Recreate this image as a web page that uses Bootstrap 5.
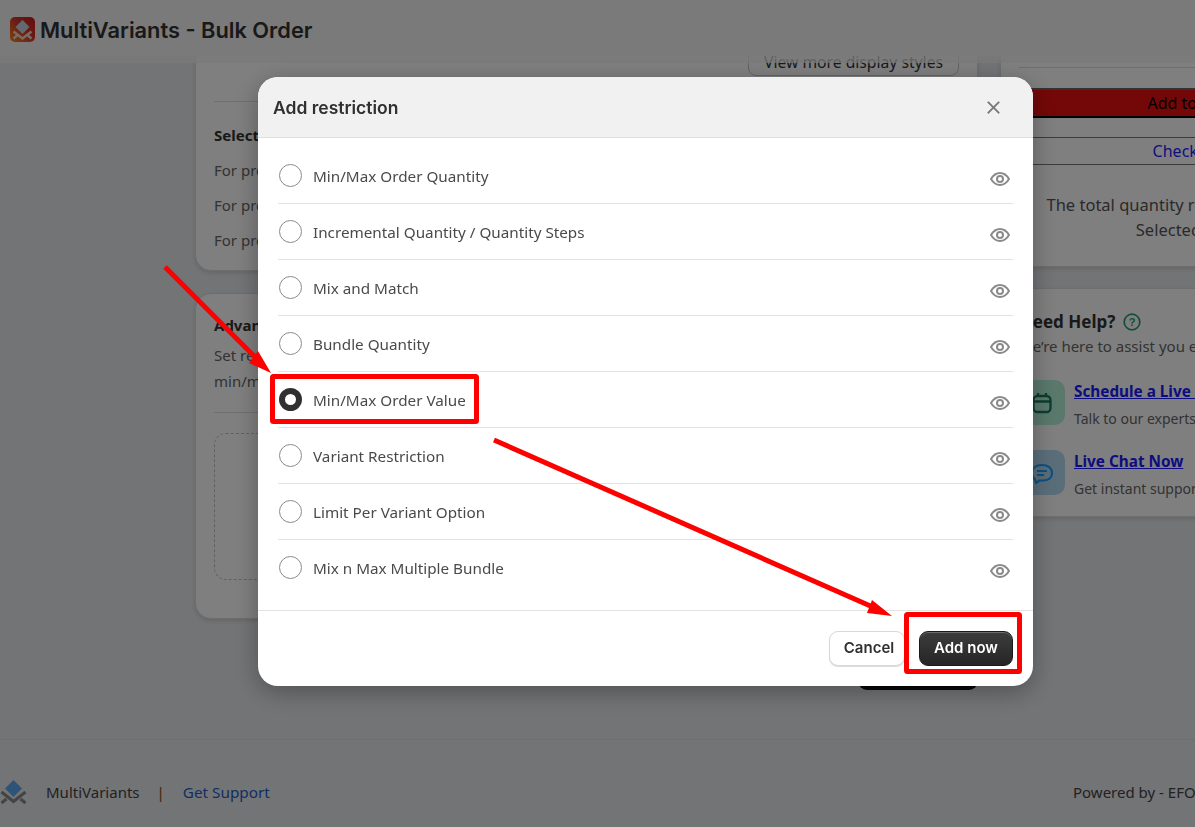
<!DOCTYPE html>
<html lang="en">
<head>
<meta charset="utf-8">
<title>MultiVariants - Bulk Order</title>
<link rel="stylesheet" href="https://cdn.jsdelivr.net/npm/bootstrap@5.3.0/dist/css/bootstrap.min.css">
<style>
html,body{height:827px;overflow:hidden}
body{background:#e6e8ec;font-family:"Noto Sans","Open Sans",sans-serif;color:#666;font-size:15px}
.stage{height:827px;overflow:hidden;display:flex;flex-direction:column}
.topbar{height:63px;flex:none;position:relative;z-index:2;margin-bottom:-7px;padding-left:10px;padding-bottom:4px;gap:5px;background:linear-gradient(#f4f4f4 0,#f4f4f4 56px,rgba(244,244,244,.75) 56px)}
.topbar-title{font:600 21.8px "Inter",sans-serif;color:#333;white-space:nowrap}
.workspace{height:684px;flex:none;overflow:hidden;padding-left:195px;gap:22px;border-bottom:1px solid #dcdee2}
.left-col{width:783px;flex:none;margin-top:-26px}
.right-col{width:380px;flex:none;margin-top:-26px}
.panel{background:#fff;border:1px solid #dcdcdc;border-radius:16px;box-shadow:0 2px 4px rgba(0,0,0,.12);padding:17px 18px;line-height:24px}
.more-btn{height:28px;width:211px;background:#fff;border:1px solid #c8c8c8;border-radius:0 0 8px 8px;color:#333;font-size:15.7px;line-height:26px;text-align:center;white-space:nowrap}
.soft-rule{height:1px;background:#dedede;margin:0}
.panel-a .soft-rule{margin:25px 0 21px}
.panel-a p{margin:0 0 11px}
.panel-a p:last-child{margin-bottom:1px}
.strong-line{font-weight:700;color:#333;font-size:15px;white-space:nowrap}
.panel-b{margin-top:22px;height:326px;padding-top:19px}
.panel-b .desc{line-height:26px;margin:5px 0 18px}
.dash-box{height:147px;margin-top:20px;border:1px dashed #c4c4c4;border-radius:12px}
.dark-btn-bg{width:120px;height:35px;background:#111;border-radius:9px;margin-top:36px}
.panel-c{height:237px;padding-top:36px;text-align:center}
.rule-top{border-top:1px solid #dedede;height:21px}
.cart-bar{height:30px;background:#e81010;border-top:2px solid #666;border-bottom:2px solid #000;color:#000;font-size:16px;line-height:26px}
.check-row{margin-top:19px;height:28px;border-top:1px solid #777;border-bottom:1px solid #777;color:#2020ff;font-size:16px;line-height:26px}
.total-note{margin-top:27px;font-size:16.5px;line-height:25px;color:#555;white-space:nowrap}
.panel-d{margin-top:21px;height:229px;padding-top:21px}
.need-title{font-size:17px;font-weight:700;color:#333;line-height:24px}
.tile-row{margin-top:22px;gap:9px}
.tile-row + .tile-row{margin-top:20px}
.tile{width:46px;height:45px;border-radius:10px;flex:none;display:flex;align-items:center;justify-content:center}
.tile-green{background:#b4f0d8}
.tile-blue{background:#b5dcf5}
.tile-title{font-size:15.3px;font-weight:700;color:#1a1aff;text-decoration:underline;line-height:22px;white-space:nowrap}
.tile-sub{font-size:14px;color:#666;line-height:22px;margin-top:6px;white-space:nowrap}
.pagefoot{flex:1;padding-top:17px;white-space:nowrap;color:#444;font-size:15px}
.foot-pipe{color:#8a4a08;margin:0 18px 0 17px}
.foot-link{color:#1f5fc4;font-size:15.3px}
.foot-logo{margin-right:19px}
.foot-right{color:#444;flex:none;margin-left:auto;width:122px;overflow:hidden}
.modal-dialog.restrict-dialog{max-width:none;width:775px;margin:77px 0 0 258px}
.restrict-content{height:609px;border:0;border-radius:20px;overflow:hidden;box-shadow:0 6px 24px rgba(0,0,0,.3)}
.restrict-head{height:61px;padding:0 32px 0 15px;background:#f1f1f1;border-bottom:1px solid #e0e0e0;border-radius:0}
.restrict-title{font:600 17.5px "Inter",sans-serif;color:#303030;margin:0}
.restrict-head .btn-close{width:15px;height:15px;padding:0;margin:0;background-size:15px;opacity:.5}
.restrict-body{padding:10px 20px 0;flex:none;height:472px}
.opt-row{height:56px;padding:0 3px 0 1px;gap:11px;border-color:#e3e3e3;background:transparent;color:#4a4a4a}
.opt-row:last-child{padding-bottom:1px}
.opt-radio.form-check-input{width:23px;height:23px;margin:-1px 0 0;flex:none;border:1px solid #8a8a8a;background:#fff}
.opt-radio.form-check-input:checked{border:6.5px solid #303030;background:#fff;background-image:none}
.opt-label{font-size:15.25px;flex:1;padding-top:2px}
.opt-eye{margin-top:6px;flex:none}
.restrict-foot{height:76px;padding:0 20px 0 0;border-top:1px solid #e3e3e3;gap:14px;justify-content:flex-end;flex-wrap:nowrap;align-items:flex-start}
.restrict-foot .btn{margin:20px 0 0;height:35px;padding:0 0 2px;font:600 15px "Inter",sans-serif;border-radius:9px}
.restrict-foot .cancel-btn{width:76px;padding-left:4px;background:#fff;border:1px solid #d8d8d8;color:#303030;box-shadow:0 1px 1px rgba(0,0,0,.15)}
.add-btn{width:94px;background:linear-gradient(#3c3c3c,#262626);border:1px solid #1a1a1a;color:#fff;box-shadow:inset 0 1px 0 rgba(255,255,255,.25)}
.annot{position:fixed;left:0;top:0;width:1195px;height:827px;z-index:1060;pointer-events:none}
</style>
</head>
<body>
<div class="stage">
  <header class="topbar d-flex align-items-center">
    <svg width="25" height="25" viewBox="0 0 25 25">
      <defs><linearGradient id="lg" x1="0" y1="1" x2="1" y2="0"><stop offset="0" stop-color="#f08a20"/><stop offset=".55" stop-color="#d8352a"/><stop offset="1" stop-color="#d01818"/></linearGradient></defs>
      <rect width="25" height="25" rx="5" fill="url(#lg)"/>
      <polygon points="12.5,3 19.5,10 12.5,17 5.5,10" fill="#c4d4e0"/>
      <path d="M3.5 14.5l9 7 9-7M3.5 21.5l4-3.2M21.5 21.5l-4-3.2" fill="none" stroke="#f4d8c8" stroke-width="2.4"/>
    </svg>
    <span class="topbar-title">MultiVariants - Bulk Order</span>
  </header>

  <main class="workspace d-flex">
    <div class="left-col">
      <section class="panel panel-a">
        <div class="d-flex justify-content-end"><div class="more-btn">View more display styles</div></div>
        <div class="soft-rule"></div>
        <p class="strong-line">Select products</p>
        <p>For products</p>
        <p>For products</p>
        <p>For products</p>
      </section>
      <section class="panel panel-b">
        <div class="strong-line">Advanced</div>
        <div class="desc">Set restrictions<br>min/max</div>
        <div class="soft-rule"></div>
        <div class="dash-box"></div>
      </section>
      <div class="d-flex justify-content-end"><div class="dark-btn-bg"></div></div>
    </div>
    <div class="right-col">
      <section class="panel panel-c">
        <div class="rule-top"></div>
        <div class="cart-bar">Add to Cart</div>
        <div class="check-row">Check out</div>
        <div class="total-note">The total quantity required is 100 pcs<br>Selected: 0/10</div>
      </section>
      <section class="panel panel-d">
        <div class="d-flex align-items-center gap-2">
          <span class="need-title">Need Help?</span>
          <svg width="18" height="18" viewBox="0 0 18 18"><circle cx="9" cy="9" r="7.8" fill="none" stroke="#2a9a70" stroke-width="1.7"/><text x="9" y="13" text-anchor="middle" font-size="11" font-weight="700" font-family="Liberation Sans" fill="#2a9a70">?</text></svg>
        </div>
        <div class="text-nowrap">We’re here to assist you every step</div>
        <div class="d-flex tile-row">
          <div class="tile tile-green">
            <svg width="20" height="22" viewBox="0 0 20 22" fill="none" stroke="#1a7a5e" stroke-width="2.3"><rect x="1.5" y="4" width="17" height="16" rx="4"/><path d="M1.5 9.5h17M6 1v4M14 1v4"/></svg>
          </div>
          <div><div class="tile-title">Schedule a Live Demo</div><div class="tile-sub">Talk to our experts today</div></div>
        </div>
        <div class="d-flex tile-row">
          <div class="tile tile-blue">
            <svg width="22" height="22" viewBox="0 0 22 22" fill="none" stroke="#20a0ff" stroke-width="2.2"><path d="M4 17.5C2 16 1 14 1 11c0-5 4-8 10-8s10 3 10 8-4 7.5-9 7.5H8.5L5 21z" stroke-linejoin="round"/><path d="M6 9h10M6 13h7"/></svg>
          </div>
          <div><div class="tile-title">Live Chat Now</div><div class="tile-sub">Get instant support from us</div></div>
        </div>
      </section>
    </div>
  </main>

  <footer class="pagefoot d-flex align-items-center">
    <svg class="foot-logo" width="27" height="27" viewBox="0 0 27 27">
      <polygon points="13.5,1 22,9.5 13.5,18 5,9.5" fill="#58a8f0"/>
      <path d="M1.5 13l12 9.5L25.500 13M1.500 24l5-4M25.500 24l-5-4" fill="none" stroke="#888" stroke-width="3"/>
    </svg>
    <span>MultiVariants</span>
    <span class="foot-pipe">|</span>
    <span class="foot-link">Get Support</span>
    <span class="foot-right">Powered by - EFOLI</span>
  </footer>
</div>

<div class="modal-backdrop show"></div>
<div class="modal d-block" role="dialog">
  <div class="modal-dialog restrict-dialog">
    <div class="modal-content restrict-content">
      <div class="modal-header restrict-head">
        <h5 class="restrict-title">Add restriction</h5>
        <button type="button" class="btn-close" aria-label="Close"></button>
      </div>
      <div class="restrict-body">
        <ul class="list-group list-group-flush">
          <li class="list-group-item d-flex align-items-center opt-row"><input class="form-check-input opt-radio" type="radio" name="r"><span class="opt-label">Min/Max Order Quantity</span><svg class="opt-eye" width="20" height="14" viewBox="0 0 20 14" fill="none" stroke="#8a8a8a" stroke-width="2"><path d="M1 7C3.500 2.800 6.500 1 10 1s6.500 1.800 9 6c-2.500 4.200-5.500 6-9 6S3.500 11.200 1 7z"/><circle cx="10" cy="7" r="3"/></svg></li>
          <li class="list-group-item d-flex align-items-center opt-row"><input class="form-check-input opt-radio" type="radio" name="r"><span class="opt-label">Incremental Quantity / Quantity Steps</span><svg class="opt-eye" width="20" height="14" viewBox="0 0 20 14" fill="none" stroke="#8a8a8a" stroke-width="2"><path d="M1 7C3.500 2.800 6.500 1 10 1s6.500 1.800 9 6c-2.500 4.200-5.500 6-9 6S3.500 11.200 1 7z"/><circle cx="10" cy="7" r="3"/></svg></li>
          <li class="list-group-item d-flex align-items-center opt-row"><input class="form-check-input opt-radio" type="radio" name="r"><span class="opt-label">Mix and Match</span><svg class="opt-eye" width="20" height="14" viewBox="0 0 20 14" fill="none" stroke="#8a8a8a" stroke-width="2"><path d="M1 7C3.500 2.800 6.500 1 10 1s6.500 1.800 9 6c-2.500 4.200-5.500 6-9 6S3.500 11.200 1 7z"/><circle cx="10" cy="7" r="3"/></svg></li>
          <li class="list-group-item d-flex align-items-center opt-row"><input class="form-check-input opt-radio" type="radio" name="r"><span class="opt-label">Bundle Quantity</span><svg class="opt-eye" width="20" height="14" viewBox="0 0 20 14" fill="none" stroke="#8a8a8a" stroke-width="2"><path d="M1 7C3.500 2.800 6.500 1 10 1s6.500 1.800 9 6c-2.500 4.200-5.500 6-9 6S3.500 11.200 1 7z"/><circle cx="10" cy="7" r="3"/></svg></li>
          <li class="list-group-item d-flex align-items-center opt-row"><input class="form-check-input opt-radio" type="radio" name="r" checked><span class="opt-label">Min/Max Order Value</span><svg class="opt-eye" width="20" height="14" viewBox="0 0 20 14" fill="none" stroke="#8a8a8a" stroke-width="2"><path d="M1 7C3.500 2.800 6.500 1 10 1s6.500 1.800 9 6c-2.500 4.200-5.500 6-9 6S3.500 11.200 1 7z"/><circle cx="10" cy="7" r="3"/></svg></li>
          <li class="list-group-item d-flex align-items-center opt-row"><input class="form-check-input opt-radio" type="radio" name="r"><span class="opt-label">Variant Restriction</span><svg class="opt-eye" width="20" height="14" viewBox="0 0 20 14" fill="none" stroke="#8a8a8a" stroke-width="2"><path d="M1 7C3.500 2.800 6.500 1 10 1s6.500 1.800 9 6c-2.500 4.200-5.500 6-9 6S3.500 11.200 1 7z"/><circle cx="10" cy="7" r="3"/></svg></li>
          <li class="list-group-item d-flex align-items-center opt-row"><input class="form-check-input opt-radio" type="radio" name="r"><span class="opt-label">Limit Per Variant Option</span><svg class="opt-eye" width="20" height="14" viewBox="0 0 20 14" fill="none" stroke="#8a8a8a" stroke-width="2"><path d="M1 7C3.500 2.800 6.500 1 10 1s6.500 1.800 9 6c-2.500 4.200-5.500 6-9 6S3.500 11.200 1 7z"/><circle cx="10" cy="7" r="3"/></svg></li>
          <li class="list-group-item d-flex align-items-center opt-row"><input class="form-check-input opt-radio" type="radio" name="r"><span class="opt-label">Mix n Max Multiple Bundle</span><svg class="opt-eye" width="20" height="14" viewBox="0 0 20 14" fill="none" stroke="#8a8a8a" stroke-width="2"><path d="M1 7C3.500 2.800 6.500 1 10 1s6.500 1.800 9 6c-2.500 4.200-5.500 6-9 6S3.500 11.200 1 7z"/><circle cx="10" cy="7" r="3"/></svg></li>
        </ul>
      </div>
      <div class="modal-footer restrict-foot">
        <button type="button" class="btn cancel-btn">Cancel</button>
        <button type="button" class="btn add-btn">Add now</button>
      </div>
    </div>
  </div>
</div>

<svg class="annot" viewBox="0 0 1195 827">
  <line x1="165" y1="267" x2="258" y2="360" stroke="#f00" stroke-width="5"/>
  <polygon points="271,373 258,351 249,363" fill="#f00"/>
  <line x1="494" y1="440" x2="875" y2="608" stroke="#f00" stroke-width="5"/>
  <polygon points="892,616 872,600 867,613" fill="#f00"/>
  <rect x="272.500" y="376.500" width="204" height="45" rx="1" fill="none" stroke="#f00" stroke-width="5"/>
  <rect x="906.500" y="614.500" width="113" height="57" rx="1" fill="none" stroke="#f00" stroke-width="5"/>
</svg>
<script src="https://cdn.jsdelivr.net/npm/bootstrap@5.3.0/dist/js/bootstrap.bundle.min.js"></script>
</body>
</html>
